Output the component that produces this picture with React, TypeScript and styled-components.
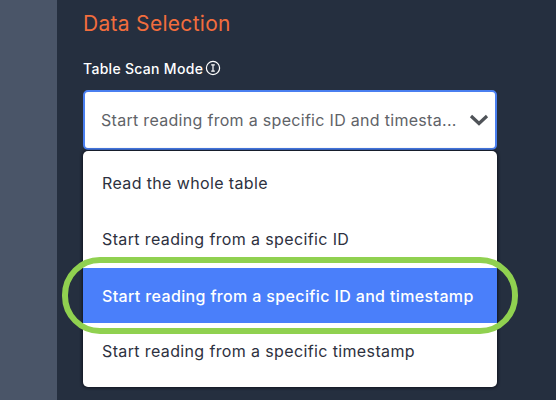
import styled, { createGlobalStyle } from 'styled-components'

const GlobalStyle = createGlobalStyle`
    html, body {
        margin: 0;
        padding: 0;
        width: 556px;
        height: 400px;
        overflow: hidden;
        background: #252f3f;
        font-family: "Inter", "Liberation Sans", sans-serif;
    }
    * {
        box-sizing: border-box;
    }
`

const Page = styled.div`
    width: 556px;
    height: 400px;
    display: flex;
    overflow: hidden;
`

const Sidebar = styled.aside`
    width: 57px;
    flex-shrink: 0;
    background: #4a5568;
`

const Content = styled.main`
    flex: 1;
    background: #252f3f;
    padding: 11px 59px 0 26px;
`

const Heading = styled.h2`
    margin: 0;
    font-size: 21px;
    line-height: 26px;
    font-weight: 400;
    letter-spacing: 0.3px;
    color: #f26d3d;
`

const Label = styled.div`
    margin-top: 22px;
    height: 18px;
    display: flex;
    align-items: center;
    gap: 2px;
    font-size: 14px;
    font-weight: 500;
    letter-spacing: 0.3px;
    color: #ffffff;
`

const SelectBox = styled.div`
    margin-top: 13px;
    height: 60px;
    background: #ffffff;
    border: 2px solid #4a7ff0;
    border-radius: 5px;
    padding: 0 6px 0 16px;
    display: flex;
    align-items: center;
    justify-content: space-between;
`

const SelectValue = styled.span`
    font-size: 16px;
    letter-spacing: 0.3px;
    color: #5f6368;
    white-space: nowrap;
`

const Menu = styled.ul`
    list-style: none;
    margin: 1px 0 0;
    padding: 4px 0 8px;
    background: #ffffff;
    border-radius: 5px;
    box-shadow: 0 0 3px 1px rgba(10, 14, 24, 0.75);
`

const MenuItem = styled.li<{ $active?: boolean }>`
    position: relative;
    height: ${p => (p.$active ? 55 : 56)}px;
    margin-top: ${p => (p.$active ? 1 : 0)}px;
    padding: 0 19px;
    display: flex;
    align-items: center;
    font-size: 16px;
    letter-spacing: ${p => (p.$active ? 0.36 : 0.37)}px;
    font-weight: ${p => (p.$active ? 500 : 400)};
    white-space: nowrap;
    color: ${p => (p.$active ? '#ffffff' : '#2d3140')};
    background: ${p => (p.$active ? '#4a7ffa' : 'transparent')};
`

const HighlightRing = styled.span`
    position: absolute;
    top: -11px;
    bottom: -11px;
    left: -21px;
    right: -21px;
    border: 6px solid #90d150;
    border-radius: 38px;
    pointer-events: none;
`

const InfoIcon = () => (
    <svg width="16" height="16" viewBox="0 0 16 16" fill="none" stroke="#ffffff" strokeWidth="1.2">
        <circle cx="8" cy="8" r="6.6" />
        <path d="M6.2 4.8h3.6M8 4.8v6.4M6.2 11.2h3.6" />
    </svg>
)

const Chevron = () => (
    <svg width="20" height="12" viewBox="0 0 20 12" fill="none" stroke="#4f5358" strokeWidth="3.2">
        <path d="M2 2l8 7.5L18 2" />
    </svg>
)

const options = [
    'Read the whole table',
    'Start reading from a specific ID',
    'Start reading from a specific ID and timestamp',
    'Start reading from a specific timestamp',
]

const App = () => {
    return (
        <Page>
            <GlobalStyle />
            <Sidebar />
            <Content>
                <Heading>Data Selection</Heading>
                <Label>
                    Table Scan Mode
                    <InfoIcon />
                </Label>
                <SelectBox>
                    <SelectValue>Start reading from a specific ID and timesta...</SelectValue>
                    <Chevron />
                </SelectBox>
                <Menu>
                    {options.map((item, i) => (
                        <MenuItem key={i} $active={i === 2}>
                            {item}
                            {i === 2 && <HighlightRing />}
                        </MenuItem>
                    ))}
                </Menu>
            </Content>
        </Page>
    )
}

export default App
